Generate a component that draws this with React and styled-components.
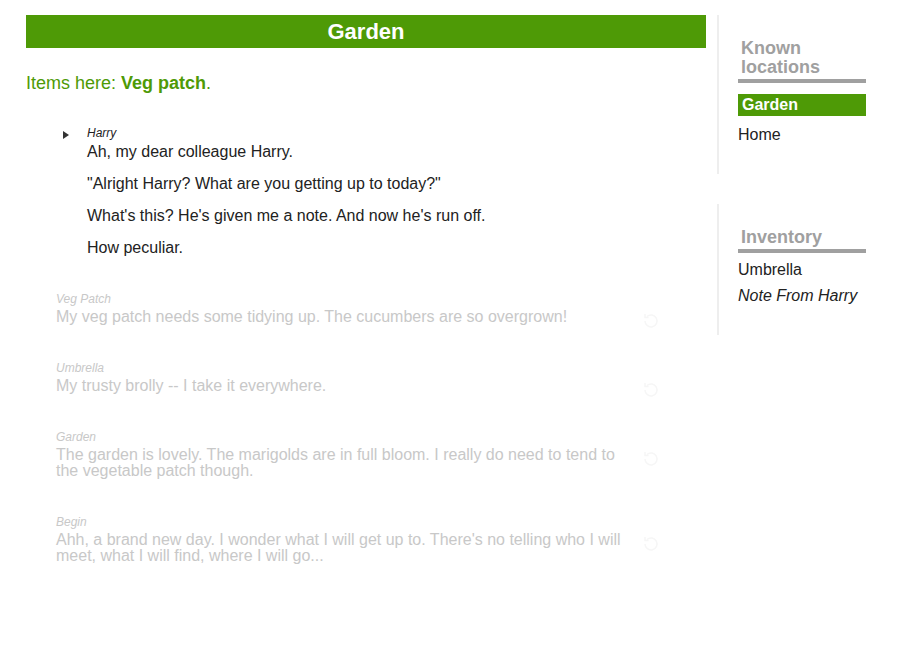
import styled, { createGlobalStyle } from "styled-components";

const GlobalStyle = createGlobalStyle`
  body {
    margin: 0;
    background: #fff;
    font-family: "Liberation Sans", Arial, sans-serif;
    color: #222;
  }
`

const locations = [
  { name: 'Garden', current: true },
  { name: 'Home' },
]

const inventory = [
  { name: 'Umbrella' },
  { name: 'Note From Harry', fresh: true },
]

const current = {
  speaker: 'Harry',
  lines: [
    'Ah, my dear colleague Harry.',
    '"Alright Harry? What are you getting up to today?"',
    "What's this? He's given me a note. And now he's run off.",
    'How peculiar.',
  ],
}

const history = [
  { label: 'Veg Patch', text: 'My veg patch needs some tidying up. The cucumbers are so overgrown!' },
  { label: 'Umbrella', text: 'My trusty brolly -- I take it everywhere.' },
  { label: 'Garden', text: 'The garden is lovely. The marigolds are in full bloom. I really do need to tend to the vegetable patch though.' },
  { label: 'Begin', text: "Ahh, a brand new day. I wonder what I will get up to. There's no telling who I will meet, what I will find, where I will go..." },
]

const App = () => {
  return (
    <>
      <GlobalStyle />
      <Page>
        <Main>
          <Title>Garden</Title>
          <ItemsHere>Items here: <strong>Veg patch</strong>.</ItemsHere>

          <Entry>
            <Marker>
              <svg width="6" height="8" viewBox="0 0 6 8"><path d="M0 0 L6 4 L0 8 Z" fill="#333" /></svg>
            </Marker>
            <div>
              <Speaker>{current.speaker}</Speaker>
              {current.lines.map((l) => <Line key={l}>{l}</Line>)}
            </div>
          </Entry>

          <History>
            {history.map((h) => (
              <PastEntry key={h.label}>
                <PastBody>
                  <PastLabel>{h.label}</PastLabel>
                  <PastText>{h.text}</PastText>
                </PastBody>
                <Replay>
                  <svg width="20" height="20" viewBox="0 0 20 20" fill="none" stroke="currentColor" strokeWidth="1.5">
                    <path d="M4 10a6 6 0 1 0 2-4.5" />
                    <path d="M4 3v3.5h3.5" />
                  </svg>
                </Replay>
              </PastEntry>
            ))}
          </History>
        </Main>

        <Sidebar>
          <Panel>
            <PanelHeading>Known locations</PanelHeading>
            {locations.map((l) => (
              <PanelItem key={l.name} $active={l.current}>{l.name}</PanelItem>
            ))}
          </Panel>
          <Panel>
            <PanelHeading>Inventory</PanelHeading>
            {inventory.map((i) => (
              <PanelItem key={i.name} $italic={i.fresh}>{i.name}</PanelItem>
            ))}
          </Panel>
        </Sidebar>
      </Page>
    </>
  )
}

export default App;


const Page = styled.div`
  display: flex;
  align-items: flex-start;
  padding: 15px 0 0 26px;
  gap: 11px;
`

const Main = styled.div`
  width: 680px;
`

const Title = styled.h1`
  margin: 0;
  height: 33px;
  line-height: 33px;
  background: #4e9a06;
  color: #fff;
  text-align: center;
  font-size: 22px;
  font-weight: 700;
`

const ItemsHere = styled.p`
  margin: 24px 0 0 0;
  font-size: 18px;
  line-height: 22px;
  color: #4e9a06;

  strong {
    font-weight: 700;
  }
`

const Entry = styled.div`
  display: flex;
  margin: 32px 0 0 30px;
`

const Marker = styled.div`
  width: 31px;
  flex-shrink: 0;
  padding: 5px 0 0 7px;
  box-sizing: border-box;

  svg {
    display: block;
  }
`

const Speaker = styled.div`
  font-size: 12px;
  line-height: 14px;
  font-style: italic;
  color: #222;
  margin-bottom: 3px;
`

const Line = styled.p`
  margin: 0 0 14px 0;
  font-size: 16px;
  line-height: 18px;
  color: #222;

  &:last-child {
    margin-bottom: 0;
  }
`

const History = styled.div`
  display: flex;
  flex-direction: column;
  gap: 36px;
  margin: 35px 0 0 30px;
`

const PastEntry = styled.div`
  display: flex;
  align-items: flex-start;
`

const PastBody = styled.div`
  width: 575px;
`

const PastLabel = styled.div`
  font-size: 12px;
  line-height: 14px;
  font-style: italic;
  color: #c8c8c8;
  margin-bottom: 3px;
`

const PastText = styled.div`
  font-size: 16px;
  line-height: 16px;
  color: #c8c8c8;
`

const Replay = styled.div`
  margin: 19px 0 -20px 10px;
  color: #f6f6f6;
  display: flex;
`

const Sidebar = styled.div`
  display: flex;
  flex-direction: column;
  gap: 30px;
`

const Panel = styled.div`
  display: flex;
  flex-direction: column;
  border-left: 2px solid #eeeeee;
  padding: 24px 0 30px 19px;
  width: 128px;
`

const PanelHeading = styled.h2`
  margin: 0;
  padding: 0 0 2px 3px;
  border-bottom: 4px solid #a0a0a0;
  font-size: 18px;
  line-height: 19px;
  font-weight: 700;
  color: #a0a0a0;
`

const PanelItem = styled.div`
  font-size: 16px;
  line-height: ${(p) => (p.$active ? '22px' : '18px')};
  margin: ${(p) => (p.$active ? '11px 0 2px 0' : '8px 0 0 0')};
  padding-left: ${(p) => (p.$active ? '4px' : '0')};
  background: ${(p) => (p.$active ? '#4e9a06' : 'transparent')};
  color: ${(p) => (p.$active ? '#fff' : '#222')};
  font-weight: ${(p) => (p.$active ? 700 : 400)};
  font-style: ${(p) => (p.$italic ? 'italic' : 'normal')};
`
